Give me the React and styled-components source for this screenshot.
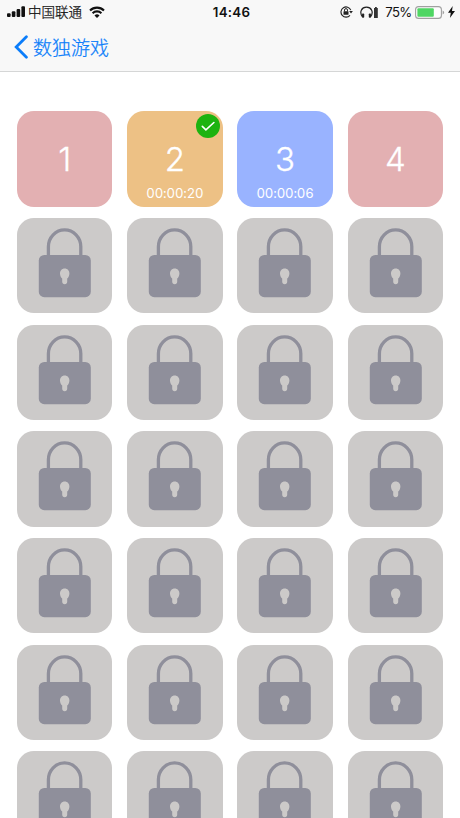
import styled, { createGlobalStyle } from 'styled-components';

const GlobalStyle = createGlobalStyle`
  * {
    box-sizing: border-box;
  }

  body {
    margin: 0;
    background: #fff;
    font-family: Inter, 'Noto Sans CJK SC', sans-serif;
    overflow: hidden;
  }
`;

const Screen = styled.div`
  width: 460px;
  height: 818px;
  overflow: hidden;
  background: #fff;
`;

const Header = styled.header`
  height: 72px;
  background: #f8f8f8;
  border-bottom: 1px solid #d5d6d6;
`;

const StatusBar = styled.div`
  display: grid;
  grid-template-columns: 1fr auto 1fr;
  align-items: center;
  height: 24px;
  padding: 0 5px 0 7px;
  color: #111;
`;

const StatusLeft = styled.div`
  display: flex;
  align-items: center;
`;

const StatusRight = styled.div`
  display: flex;
  align-items: center;
  justify-content: flex-end;
`;

const Carrier = styled.span`
  margin: 0 7px 0 3px;
  font-family: 'Noto Sans CJK SC', sans-serif;
  font-size: 13.5px;
  font-weight: 300;
  -webkit-text-stroke: 0.25px #111;
  line-height: 22px;
  transform: translateY(-1px);
`;

const Clock = styled.span`
  padding-left: 1px;
  font-size: 13.3px;
  font-weight: 600;
  letter-spacing: 0.25px;
`;

const Percent = styled.span`
  margin: 0 3.5px 0 7px;
  font-size: 13.2px;
  letter-spacing: -0.7px;
`;

const BackButton = styled.button`
  display: flex;
  align-items: center;
  height: 46px;
  margin: 0;
  padding: 0 0 0 14px;
  border: 0;
  background: none;
  color: #0b7dfa;
  font-family: 'Noto Sans CJK SC', sans-serif;
  font-size: 19px;
  font-weight: 300;
  -webkit-text-stroke: 0.25px #0b7dfa;
  line-height: 28px;

  span {
    margin-left: 5px;
  }
`;

const Levels = styled.main`
  display: grid;
  grid-template-columns: repeat(4, 95.4px);
  grid-auto-rows: 95.5px;
  gap: 11.15px 14.8px;
  padding: 39.3px 17px 0;
`;

const Tile = styled.div`
  position: relative;
  display: flex;
  flex-direction: column;
  align-items: center;
  border-radius: 17px;
  overflow: hidden;
  background: ${({ $color }) => $color};
  color: #fff;
`;

const LevelNumber = styled.div`
  margin-top: 28px;
  font-size: 33px;
  font-weight: 300;
  -webkit-text-stroke: 0.3px #fff;
  line-height: 41px;
`;

const LevelTime = styled.div`
  margin-top: 4px;
  font-size: 13.2px;
  line-height: 18px;
  letter-spacing: -0.15px;
  font-variant-numeric: tabular-nums;
  white-space: nowrap;
`;

const DoneBadge = styled.svg`
  position: absolute;
  top: 3px;
  right: 2.5px;
`;

const HeadphonesGap = styled.span`
  display: flex;
  margin-left: 7px;
`;

const BoltGap = styled.span`
  display: flex;
  margin-left: 3px;
`;

const SignalIcon = () => (
  <svg width="18" height="12" viewBox="0 0 18 12" fill="#111">
    <rect x="0" y="7.2" width="3.6" height="3.8" rx="1" />
    <rect x="4.8" y="5.2" width="3.6" height="5.8" rx="1" />
    <rect x="9.6" y="3" width="3.6" height="8" rx="1" />
    <rect x="14.4" y="0.2" width="3.6" height="10.8" rx="1" />
  </svg>
);

const WifiIcon = () => (
  <svg width="16" height="12" viewBox="0 0 16 12" fill="none" stroke="#111" strokeWidth="2.1">
    <path d="M1 4.5a10 10 0 0 1 14 0" />
    <path d="M3.6 7.2a6.3 6.3 0 0 1 8.8 0" />
    <path d="M8 12 5.5 9.4a3.6 3.6 0 0 1 5 0Z" fill="#111" stroke="none" />
  </svg>
);

const RotationLockIcon = () => (
  <svg width="13" height="12" viewBox="0 0 13 12" fill="none" stroke="#222">
    <path d="M10.8 4.1A5.1 5.1 0 1 0 10 9.3" strokeWidth="1.1" />
    <path d="M9.1 4.9h3.8L11 7.6Z" fill="#222" stroke="none" />
    <rect x="3.5" y="5.2" width="5" height="3.6" rx="0.5" fill="#222" stroke="none" />
    <path d="M4.5 5.4V4.1a1.5 1.5 0 0 1 3 0v1.3" strokeWidth="1" />
  </svg>
);

const HeadphonesIcon = () => (
  <svg width="18" height="13" viewBox="0 0 18 13" fill="none">
    <path d="M2.5 11C-1.2 5.8 1.8 1.2 6.5 1.2s7.7 4.6 4 9.8" stroke="#222" strokeWidth="1.2" />
    <rect x="2" y="7.4" width="2.2" height="4.4" rx="0.8" fill="#222" />
    <rect x="8.8" y="7.4" width="2.2" height="4.4" rx="0.8" fill="#222" />
    <path d="M14 2h1V1h1.8v1h1v10H14Z" fill="#333" />
  </svg>
);

const BatteryIcon = () => (
  <svg width="30" height="13" viewBox="0 0 30 13" fill="none">
    <rect x="0.6" y="0.6" width="25.8" height="11.8" rx="3" fill="#fdfdfd" stroke="#a0a0a0" strokeWidth="1.1" />
    <rect x="2.4" y="2.3" width="16.4" height="8.4" rx="1" fill="#4fd663" />
    <path d="M27.6 4.4q1.5.6 1.5 2.1t-1.5 2.1Z" fill="#a0a0a0" />
  </svg>
);

const BoltIcon = () => (
  <svg width="7" height="12" viewBox="0 0 7 12" fill="#111">
    <path d="M4.7 0 0 6.7h2.8L1.9 12 7 4.9H4Z" />
  </svg>
);

const ChevronIcon = () => (
  <svg width="14" height="24" viewBox="0 0 14 24" fill="none" stroke="#0b7dfa" strokeWidth="2.8" strokeLinecap="round">
    <path d="M12.4 1.8 2.2 12l10.2 10.2" />
  </svg>
);

const LockIcon = () => (
  <svg width="95.5" height="95.5" viewBox="0 0 95.5 95.5">
    <path d="M31.4 39V28.7a16.2 16.8 0 0 1 32.4 0V39" fill="none" stroke="#8f8f9b" strokeWidth="3.3" />
    <rect x="21.8" y="37" width="52" height="42.2" rx="5.5" fill="#8f8f9b" />
    <path
      d="M47.7 50.4c-2.8 0-4.7 2.2-4.7 5 0 2.1 1 3.9 2.2 5.2v3.2c0 1.5 1 2.4 2.5 2.4s2.5-.9 2.5-2.4v-3.2c1.2-1.3 2.2-3.1 2.2-5.2 0-2.8-1.9-5-4.7-5Z"
      fill="#cccac9"
    />
  </svg>
);

const levels = [
  { number: 1, color: '#e3b0b2' },
  { number: 2, color: '#edc185', time: '00:00:20', done: true },
  { number: 3, color: '#99b3ff', time: '00:00:06' },
  { number: 4, color: '#e3b0b2' },
];

const lockedLevels = Array.from({ length: 24 }, (_, i) => i + 5);

const App = () => {
  return (
    <>
      <GlobalStyle />
      <Screen>
        <Header>
          <StatusBar>
            <StatusLeft>
              <SignalIcon />
              <Carrier>中国联通</Carrier>
              <WifiIcon />
            </StatusLeft>
            <Clock>14:46</Clock>
            <StatusRight>
              <RotationLockIcon />
              <HeadphonesGap>
                <HeadphonesIcon />
              </HeadphonesGap>
              <Percent>75%</Percent>
              <BatteryIcon />
              <BoltGap>
                <BoltIcon />
              </BoltGap>
            </StatusRight>
          </StatusBar>
          <BackButton>
            <ChevronIcon />
            <span>数独游戏</span>
          </BackButton>
        </Header>

        <Levels>
          {levels.map(({ number, color, time, done }) => (
            <Tile key={number} $color={color}>
              <LevelNumber>{number}</LevelNumber>
              {time && <LevelTime>{time}</LevelTime>}
              {done && (
                <DoneBadge width="24" height="24" viewBox="0 0 24 24" fill="none">
                  <circle cx="12" cy="12" r="12" fill="#1db310" />
                  <path d="m6.3 12.4 3.6 3.5 8-7.4" stroke="#fff" strokeWidth="1.6" strokeLinecap="round" />
                </DoneBadge>
              )}
            </Tile>
          ))}
          {lockedLevels.map((number) => (
            <Tile key={number} $color="#cccac9">
              <LockIcon />
            </Tile>
          ))}
        </Levels>
      </Screen>
    </>
  );
};

export default App;
